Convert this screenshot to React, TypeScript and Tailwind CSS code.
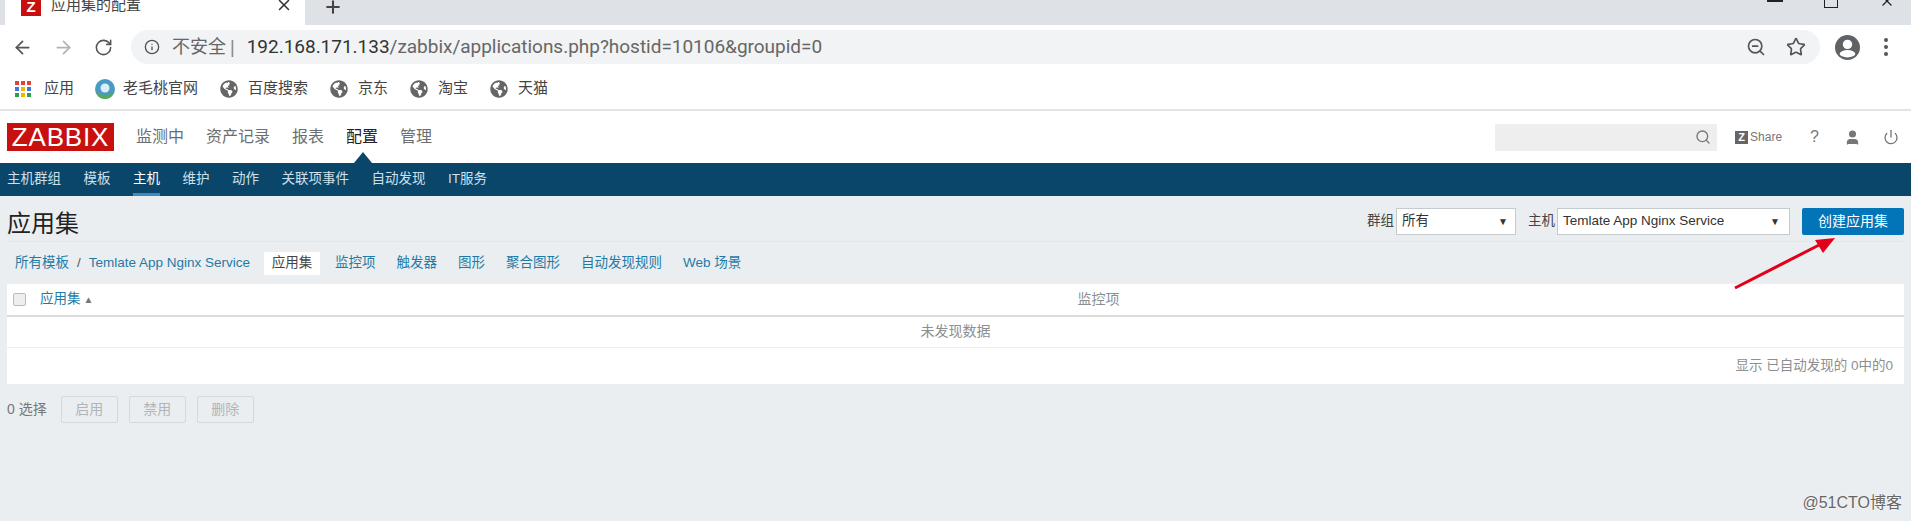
import React from "react";
import { ArrowLeft, ArrowRight, RotateCw, Info, ZoomOut, Star, Search, User, Power, Plus, X } from "lucide-react";
import { FaGlobeAmericas } from "react-icons/fa";

const FONT = "font-['Liberation_Sans','Noto_Sans_CJK_SC',sans-serif]";

const appDots = [
  "bg-[#e0452f]", "bg-[#e0452f]", "bg-[#e0452f]",
  "bg-[#3b78e7]", "bg-[#f4b400]", "bg-[#3b78e7]",
  "bg-[#2e9e4f]", "bg-[#f4b400]", "bg-[#2e9e4f]",
];

const bookmarks = ["百度搜索", "京东", "淘宝", "天猫"];
const mainNav = ["监测中", "资产记录", "报表", "配置", "管理"];
const subNav = ["主机群组", "模板", "主机", "维护", "动作", "关联项事件", "自动发现", "IT服务"];
const hostTabs = ["监控项", "触发器", "图形", "聚合图形", "自动发现规则", "Web 场景"];

function BrowserChrome() {
  return (
    <div className="bg-white">
      {/* tab strip, cut off at the top */}
      <div className="h-[25px] bg-[#dee1e6] flex items-start overflow-hidden relative">
        <div className="ml-[5px] w-[300px] h-[25px] bg-white flex items-start pl-[16px] pr-[12px]">
          <div className="w-[20px] h-[16px] bg-[#c8100f] text-white text-[15px] font-bold leading-[14px] text-center">Z</div>
          <span className="ml-[10px] text-[15px] leading-[9px] text-[#444]">应用集的配置</span>
          <X size={18} className="ml-auto -mt-[4px] text-[#333]" />
        </div>
        <Plus size={20} strokeWidth={2.5} className="ml-[18px] -mt-[3px] text-[#444]" />
        <div className="ml-auto flex items-start pr-[16px] gap-[41px]">
          <div className="w-[16px] h-[2px] bg-[#222]"></div>
          <div className="w-[14px] h-[8px] border border-t-0 border-[#222]"></div>
          <X size={16} className="-mt-[7px] text-[#222]" />
        </div>
      </div>
      {/* address row */}
      <div className="h-[43px] pt-[1px] flex items-center pl-[12px]">
        <ArrowLeft size={21} className="text-[#555]" />
        <ArrowRight size={21} className="ml-[20px] text-[#b0b3b6]" />
        <RotateCw size={19} className="ml-[20px] text-[#555]" />
        <div className="ml-[18px] w-[1689px] h-[34px] rounded-full bg-[#f1f3f4] flex items-center pl-[13px] pr-[14px]">
          <Info size={16} className="text-[#555]" />
          <span className="ml-[12px] text-[18px] text-[#666]">不安全</span>
          <span className="ml-[4px] text-[18px] text-[#888]">|</span>
          <span className="ml-[12px] text-[19px] tracking-[-0.02px] font-['Roboto',sans-serif] text-[#333]">
            192.168.171.133<span className="text-[#666]">/zabbix/applications.php?hostid=10106&amp;groupid=0</span>
          </span>
          <ZoomOut size={20} className="ml-auto text-[#555]" />
          <Star size={20} className="ml-[20px] text-[#555]" />
        </div>
        <svg width="25" height="25" viewBox="0 0 24 24" className="ml-[15px]">
          <circle cx="12" cy="12" r="12" fill="#5f6368" />
          <circle cx="12" cy="9" r="4.5" fill="#fff" />
          <ellipse cx="12" cy="18" rx="7.5" ry="3.5" fill="#fff" />
        </svg>
        <div className="ml-[24px] flex flex-col gap-[3px]">
          <div className="w-[4px] h-[4px] rounded-full bg-[#555]"></div>
          <div className="w-[4px] h-[4px] rounded-full bg-[#555]"></div>
          <div className="w-[4px] h-[4px] rounded-full bg-[#555]"></div>
        </div>
      </div>
      {/* bookmarks */}
      <div className="h-[41px] flex items-center pl-[15px] text-[15px] text-[#444]">
        <div className="grid grid-cols-3 gap-[2px] w-[16px]">
          {appDots.map((c, i) => (
            <div key={i} className={`h-[4px] ${c}`}></div>
          ))}
        </div>
        <span className="ml-[13px]">应用</span>
        <svg width="20" height="20" viewBox="0 0 20 20" className="ml-[21px]">
          <circle cx="10" cy="10" r="10" fill="#4a9bc4" />
          <path d="M1 12 a9 8 0 0 0 18 0 a9 4 0 0 1 -18 0" fill="#5aa85a" />
          <circle cx="10" cy="9" r="4.5" fill="#d9eef8" />
        </svg>
        <span className="ml-[8px]">老毛桃官网</span>
        {bookmarks.map((b, i) => (
          <div key={b} className={`flex items-center ${i === 0 ? "ml-[22px]" : "ml-[22px]"}`}>
            <FaGlobeAmericas size={18} className="text-[#666]" />
            <span className="ml-[10px]">{b}</span>
          </div>
        ))}
      </div>
      <div className="h-[2px] bg-[#e4e4e4]"></div>
    </div>
  );
}

function ZabbixHeader() {
  return (
    <div>
      <div className="h-[52px] bg-white flex items-center pl-[7px] pr-[12px]">
        <div className="w-[107px] h-[28px] bg-[#c8100f] text-white text-[26px] leading-[28px] text-center tracking-[0.8px]">ZABBIX</div>
        <div className="ml-[22px] flex gap-[22px] text-[16px] text-[#6b6f71]">
          {mainNav.map((n) => (
            <span key={n} className={n === "配置" ? "text-[#222]" : ""}>{n}</span>
          ))}
        </div>
        <div className="ml-auto w-[222px] h-[27px] bg-[#eeeeee] flex items-center justify-end pr-[6px]">
          <Search size={16} className="text-[#777]" />
        </div>
        <div className="ml-[18px] w-[13px] h-[13px] bg-[#666] text-white text-[11px] font-bold leading-[13px] text-center">Z</div>
        <span className="ml-[2px] text-[12px] text-[#777]">Share</span>
        <span className="ml-[28px] text-[16px] text-[#777]">?</span>
        <User size={17} fill="#777" className="ml-[25px] text-[#777]" />
        <Power size={16} className="ml-[22px] text-[#777]" />
      </div>
      <div className="h-[33px] bg-[#0a466a] flex items-center pl-[7px] gap-[22.5px] text-[13.5px] text-[#cfe0ea] relative">
        {/* caret under the active top menu */}
        <div className="absolute left-[354px] -top-[11px] w-0 h-0 border-x-[9px] border-x-transparent border-b-[11px] border-b-[#0a466a]"></div>
        {subNav.map((n) => (
          <span key={n} className={`h-full flex items-center ${n === "主机" ? "text-white border-b-[3px] border-[#3c8cc0] pt-[3px]" : ""}`}>{n}</span>
        ))}
      </div>
    </div>
  );
}

function Content() {
  return (
    <div className="px-[7px]">
      {/* title + filters */}
      <div className="h-[46px] pt-[6px] flex items-center border-b border-[#e3e6e8]">
        <h1 className="mt-[4px] text-[24px] font-normal text-[#222]">应用集</h1>
        <span className="ml-auto text-[13.5px] text-[#444]">群组</span>
        <div className="ml-[2px] w-[120px] h-[27px] bg-white border border-[#c5cacd] flex items-center justify-between px-[5px] text-[13.5px] text-[#333]">
          <span>所有</span>
          <span className="text-[10px] pr-[2px]">▼</span>
        </div>
        <span className="ml-[12px] text-[13.5px] text-[#444]">主机</span>
        <div className="ml-[2px] w-[233px] h-[27px] bg-white border border-[#c5cacd] flex items-center justify-between px-[5px] text-[13.5px] text-[#333]">
          <span>Temlate App Nginx Service</span>
          <span className="text-[10px] pr-[4px]">▼</span>
        </div>
        <button className="ml-[12px] w-[102px] h-[27px] bg-[#0275b8] rounded-[2px] text-white text-[14px]">创建应用集</button>
      </div>
      {/* host nav */}
      <div className="h-[42px] flex items-center pl-[8px] text-[13.5px] text-[#1f7ba6]">
        <span>所有模板</span>
        <span className="mx-[8px] text-[#555]">/</span>
        <span>Temlate App Nginx Service</span>
        <span className="ml-[14px] w-[56px] h-[23px] bg-white text-[#444] flex items-center justify-center">应用集</span>
        <div className="ml-[15px] flex gap-[21px]">
          {hostTabs.map((t) => (
            <span key={t}>{t}</span>
          ))}
        </div>
      </div>
      {/* table */}
      <div className="bg-white text-[14px]">
        <div className="h-[33px] flex items-center border-b-2 border-[#dcdcdc] relative">
          <div className="ml-[6px] w-[13px] h-[13px] bg-[#eeeeee] border border-[#bbbbbb] rounded-[2px]"></div>
          <span className="ml-[14px] text-[13.5px] text-[#1f7ba6]">应用集</span>
          <span className="ml-[3px] text-[10px] text-[#777]">▲</span>
          <span className="ml-[984px] text-[#8a8f92]">监控项</span>
        </div>
        <div className="h-[31px] pb-[2px] flex items-center justify-center border-b border-[#ebeef0] text-[#8a8f92]">未发现数据</div>
        <div className="h-[36px] flex items-center justify-end pr-[11px] text-[13.5px] text-[#8a8f92]">显示 已自动发现的 0中的0</div>
      </div>
      {/* action bar */}
      <div className="mt-[12px] flex items-center text-[14px]">
        <span className="text-[#777]">0 选择</span>
        <div className="ml-[14px] flex gap-[11px]">
          {["启用", "禁用", "删除"].map((b) => (
            <button key={b} className="w-[57px] h-[27px] border border-[#d5d9dc] rounded-[2px] text-[#b0b5b8]">{b}</button>
          ))}
        </div>
      </div>
    </div>
  );
}

export default function App() {
  return (
    <div className={`relative h-[521px] overflow-hidden bg-[#ebeef0] ${FONT}`}>
      <BrowserChrome />
      <ZabbixHeader />
      <Content />
      {/* red annotation arrow */}
      <svg width="120" height="70" viewBox="0 0 120 70" className="absolute left-[1725px] top-[230px]">
        <path d="M10 58 L98 13" stroke="#e2001a" strokeWidth="3" />
        <path d="M110 8 L90 10 L98 23 Z" fill="#e2001a" />
      </svg>
      <span className="absolute right-[9px] bottom-[6px] text-[16px] text-[#666] [text-shadow:0_0_2px_#fff]">@51CTO博客</span>
    </div>
  );
}
